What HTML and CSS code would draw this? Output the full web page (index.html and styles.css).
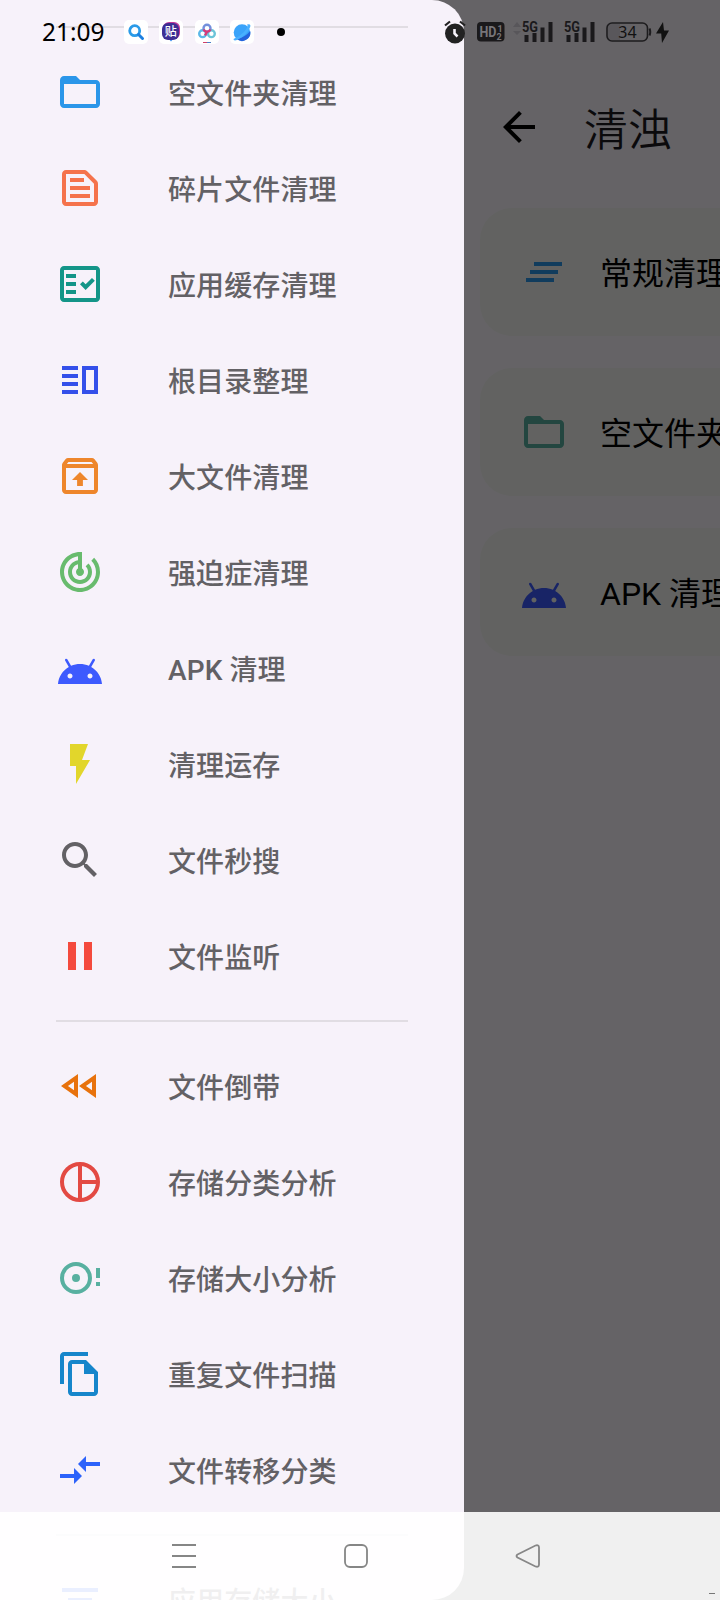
FILE: index.html
```html
<!DOCTYPE html>
<html lang="zh-CN">
<head>
	<meta charset="utf-8">
	<meta name="viewport" content="width=device-width, initial-scale=1">
<title>清浊</title>
<link rel="stylesheet" href="styles.css">
</head>
<body>

<!-- shared icons -->
<svg class="defs">
	<symbol id="folder" viewBox="0 0 24 24"><path d="M20 6h-8l-2-2H4c-1.1 0-1.99.9-1.99 2L2 18c0 1.1.9 2 2 2h16c1.1 0 2-.9 2-2V8c0-1.1-.9-2-2-2zm0 12H4V8h16v10z"/></symbol>
	<symbol id="android" viewBox="0 0 24 24"><path transform="translate(0 2)" d="M17.6 9.48l1.84-3.18c.16-.31.04-.69-.26-.85-.29-.15-.65-.06-.83.22l-1.88 3.24c-2.86-1.21-6.08-1.21-8.94 0L5.65 5.67c-.19-.29-.58-.38-.87-.2-.28.18-.37.54-.22.83L6.4 9.48C3.3 11.25 1.28 14.44 1 18h22c-.28-3.56-2.3-6.75-5.4-8.52zM7 15.25c-.69 0-1.25-.56-1.25-1.25s.56-1.25 1.25-1.25 1.25.56 1.25 1.25-.56 1.25-1.25 1.25zm10 0c-.69 0-1.25-.56-1.25-1.25s.56-1.25 1.25-1.25 1.25.56 1.25 1.25-.56 1.25-1.25 1.25z"/></symbol>
</svg>

<div class="screen">

<!-- page behind the drawer -->
<div class="app">
	<div class="toolbar">
		<svg class="icon" viewBox="0 0 24 24"><path d="M20 11H7.83l5.59-5.59L12 4l-8 8 8 8 1.41-1.41L7.83 13H20v-2z"/></svg>
		<h1>清浊</h1>
	</div>
	<div class="cards">
		<div class="card">
			<svg class="icon blue" viewBox="0 0 24 24"><path d="M5 13h14v-2H5v2zm-2 4h14v-2H3v2zM7 7v2h14V7H7z"/></svg>
			<span>常规清理</span>
		</div>
		<div class="card">
			<svg class="icon mint"><use href="#folder"/></svg>
			<span>空文件夹清理</span>
		</div>
		<div class="card">
			<svg class="icon indigo"><use href="#android"/></svg>
			<span>APK 清理</span>
		</div>
	</div>
</div>

<div class="scrim"></div>

<div class="drawer">
	<hr>
	<div class="item">
		<svg class="icon blue"><use href="#folder"/></svg>
		<span>空文件夹清理</span>
	</div>
	<div class="item">
		<svg class="icon coral" viewBox="0 0 24 24"><path d="M14.17 5L19 9.83V19H5V5h9.17m0-2H5c-1.1 0-2 .9-2 2v14c0 1.1.9 2 2 2h14c1.1 0 2-.9 2-2V9.83c0-.53-.21-1.04-.59-1.41l-4.83-4.83c-.37-.38-.88-.59-1.41-.59zM7 15h10v2H7v-2zm0-4h10v2H7v-2zm0-4h7v2H7V7z"/></svg>
		<span>碎片文件清理</span>
	</div>
	<div class="item">
		<svg class="icon teal" viewBox="0 0 24 24"><path d="M20 3H4c-1.1 0-2 .9-2 2v14c0 1.1.9 2 2 2h16c1.1 0 2-.9 2-2V5c0-1.1-.9-2-2-2zm0 16H4V5h16v14z"/><path d="M19.41 10.42L17.99 9l-3.17 3.17-1.41-1.42L12 12.16 14.82 15zM5 7h5v2H5zM5 11h5v2H5zM5 15h5v2H5z"/></svg>
		<span>应用缓存清理</span>
	</div>
	<div class="item">
		<svg class="icon royal" viewBox="0 0 24 24"><path fill-rule="evenodd" d="M3 5h8v2H3zM3 9h8v2H3zM3 13h8v2H3zM3 17h8v2H3zM13 5h8v14h-8zM15 7v10h4V7z"/></svg>
		<span>根目录整理</span>
	</div>
	<div class="item">
		<svg class="icon orange" viewBox="0 0 24 24"><path d="M20.55 5.22l-1.39-1.68C18.88 3.21 18.47 3 18 3H6c-.47 0-.88.21-1.15.55L3.46 5.22C3.17 5.57 3 6.01 3 6.5V19c0 1.1.89 2 2 2h14c1.1 0 2-.9 2-2V6.5c0-.49-.17-.93-.45-1.28zM6.24 5h11.52l.83 1H5.42l.82-1zM5 19V8h14v11H5zm3-5h2.55v3h2.9v-3H16l-4-4z"/></svg>
		<span>大文件清理</span>
	</div>
	<div class="item">
		<svg class="icon green" viewBox="0 0 24 24"><path d="M19.07 4.93l-1.41 1.41C19.1 7.79 20 9.79 20 12c0 4.42-3.58 8-8 8s-8-3.58-8-8c0-4.08 3.05-7.44 7-7.93v2.02C8.16 6.57 6 9.03 6 12c0 3.31 2.69 6 6 6s6-2.69 6-6c0-1.66-.67-3.16-1.76-4.24l-1.41 1.41C15.55 9.9 16 10.9 16 12c0 2.21-1.79 4-4 4s-4-1.79-4-4c0-1.86 1.28-3.41 3-3.86v2.14c-.6.35-1 .98-1 1.72 0 1.1.9 2 2 2s2-.9 2-2c0-.74-.4-1.38-1-1.72V2h-1C6.48 2 2 6.48 2 12s4.48 10 10 10 10-4.48 10-10c0-2.76-1.12-5.26-2.93-7.07z"/></svg>
		<span>强迫症清理</span>
	</div>
	<div class="item">
		<svg class="icon indigo"><use href="#android"/></svg>
		<span>APK 清理</span>
	</div>
	<div class="item">
		<svg class="icon yellow" viewBox="0 0 24 24"><path d="M7 2v11h3v9l7-12h-4l3-8z"/></svg>
		<span>清理运存</span>
	</div>
	<div class="item">
		<svg class="icon grey" viewBox="0 0 24 24"><path d="M15.5 14h-.79l-.28-.27C15.41 12.59 16 11.11 16 9.5 16 5.91 13.09 3 9.5 3S3 5.91 3 9.5 5.91 16 9.5 16c1.61 0 3.09-.59 4.23-1.57l.27.28v.79l5 4.99L20.49 19l-4.99-5zm-6 0C7.01 14 5 11.99 5 9.5S7.01 5 9.5 5 14 7.01 14 9.5 11.99 14 9.5 14z"/></svg>
		<span>文件秒搜</span>
	</div>
	<div class="item">
		<svg class="icon red" viewBox="0 0 24 24"><path d="M6 19h4V5H6v14zm8-14v14h4V5h-4z"/></svg>
		<span>文件监听</span>
	</div>
	<hr>
	<div class="item">
		<svg class="icon amber" viewBox="0 0 24 24"><path d="M18 9.86v4.28L14.97 12 18 9.86m-9 0v4.28L5.97 12 9 9.86M20 6l-8.5 6 8.5 6V6zm-9 0l-8.5 6 8.5 6V6z"/></svg>
		<span>文件倒带</span>
	</div>
	<div class="item">
		<svg class="icon pie" viewBox="0 0 24 24"><circle cx="12" cy="12" r="9"/><path d="M12 3v18M12 12h9"/></svg>
		<span>存储分类分析</span>
	</div>
	<div class="item">
		<svg class="icon mint" viewBox="0 0 24 24"><path fill-rule="evenodd" d="M10 4a8 8 0 1 0 0 16a8 8 0 1 0 0-16zM10 6a6 6 0 1 1 0 12a6 6 0 1 1 0-12zM10 10a2 2 0 1 0 0 4a2 2 0 1 0 0-4zM20 7h2v5h-2zM20 14h2v2h-2z"/></svg>
		<span>存储大小分析</span>
	</div>
	<div class="item">
		<svg class="icon sky" viewBox="0 0 24 24"><path fill-rule="evenodd" d="M16 1H4c-1.1 0-2 .9-2 2v14h2V3h12V1zM15 5l6 6v10c0 1.1-.9 2-2 2H8c-1.1 0-2-.9-2-2V7c0-1.1.9-2 2-2h7zM8 7v14h11v-9h-5V7z"/></svg>
		<span>重复文件扫描</span>
	</div>
	<div class="item">
		<svg class="icon azure" viewBox="0 0 24 24"><path d="M9.01 14H2v2h7.01v3L13 15l-3.99-4v3zm5.98-1v-3H22V8h-7.01V5L11 9l3.99 4z"/></svg>
		<span>文件转移分类</span>
	</div>
	<hr>
	<div class="item">
		<svg class="icon azure" viewBox="0 0 24 24"><path d="M10 18h4v-2h-4v2zM3 6v2h18V6H3zm3 7h12v-2H6v2z"/></svg>
		<span>应用存储大小</span>
	</div>
</div>

<div class="status">
	<span class="time">21:09</span>
	<div class="notes">
		<!-- search -->
		<svg viewBox="0 0 24 24"><rect width="24" height="24" rx="5" fill="#fff"/><circle cx="10.7" cy="10.7" r="5" fill="none" stroke="#2a9be8" stroke-width="2.8"/><path d="M14.5 14.5l4 4" stroke="#1c7fe0" stroke-width="3" stroke-linecap="round"/></svg>
		<!-- tieba -->
		<svg viewBox="0 0 24 24"><rect width="24" height="24" rx="5" fill="#fff"/><path d="M9 18h6l-3 3.500z" fill="#3e8ff0"/><rect x="4" y="2" width="17" height="17" rx="6" fill="#c23a9a"/><rect x="3" y="3" width="17" height="17" rx="6" fill="#3e2f94"/><text x="11.700" y="16" text-anchor="middle" class="tie">贴</text></svg>
		<!-- netdisk -->
		<svg viewBox="0 0 24 24"><rect width="24" height="24" rx="5" fill="#fff"/><g fill="none" stroke-width="2.400"><circle cx="7.600" cy="13.700" r="3.400" stroke="#5cb8e8"/><circle cx="16.400" cy="13.700" r="3.400" stroke="#6cc4d8"/><circle cx="12" cy="8.200" r="3.500" stroke="#7390dc"/><path d="M8.500 9.500q1.300 2.300 3.500 2.300t3.500-2.300M12 12l-2 3.400" stroke="#d83a78"/></g><path d="M8 22.500h4" stroke="#d0406a"/><path d="M12 22.500h4" stroke="#4a7fc8"/></svg>
		<!-- browser -->
		<svg viewBox="0 0 24 24"><rect width="24" height="24" rx="5" fill="#fff"/><circle cx="12" cy="12.500" r="8.300" fill="#3aa4fa"/><path d="M20.200 11a8.300 8.300 0 0 1-13.500 8Q15 17.500 20.200 11z" fill="#2463dc"/><path d="M3.500 19Q3.500 21.500 8 19.500Q17 15 20.200 7Q21.200 3.200 17 4.600Q19 6 14 12Q9 17 3.500 19z" fill="#48b0ff"/></svg>
	</div>
	<i class="dot"></i>
	<svg class="alarm" width="22" height="24" viewBox="0 0 22 24"><circle cx="11" cy="13.500" r="10" fill="#222"/><path d="M1 5.500L6 1.500M21 5.500L16 1.500" stroke="#222" stroke-width="2.200"/><path d="M10.500 9v4.500l3 3" stroke="#f6f2fa" stroke-width="2.600" fill="none"/></svg>
	<svg class="hd" width="28" height="20" viewBox="0 0 28 20"><rect width="27.500" height="19.500" rx="4" fill="#1a191b"/><text x="2.500" y="15" class="hdt" textLength="17" lengthAdjust="spacingAndGlyphs">HD</text><text x="20.500" y="9.500" class="sub">1</text><text x="19.500" y="17.500" class="sub">2</text></svg>
	<svg class="sig" width="42" height="24" viewBox="0 0 42 24"><path d="M0 7l4-5 4 5zM0 11l4 4 4-4z" fill="#58565a"/><text x="9" y="12" class="net" textLength="16" lengthAdjust="spacingAndGlyphs">5G</text><path d="M11.500 15h4v7h-4zM19.500 13h4v9h-4zM27.500 7.500h4V22h-4zM35.500 2h4v20h-4z"/></svg>
	<svg class="sig" width="42" height="24" viewBox="0 0 42 24"><text x="9" y="12" class="net" textLength="16" lengthAdjust="spacingAndGlyphs">5G</text><path d="M11.500 15h4v7h-4zM19.500 13h4v9h-4zM27.500 7.500h4V22h-4zM35.500 2h4v20h-4z"/></svg>
	<svg class="bat" width="46" height="20" viewBox="0 0 46 20"><path d="M5 2h9v16H5q-3 0-3-3V5q0-3 3-3z" fill="#59575b"/><rect x="1" y="1" width="40.500" height="18" rx="5" fill="none" stroke="#1d1c1e" stroke-width="1.600"/><path d="M43.500 6.500q1.500 3.500 0 7" stroke="#1d1c1e" stroke-width="2" fill="none"/><text x="21.500" y="15.500" text-anchor="middle" class="pct">34</text></svg>
	<svg class="bolt" width="13" height="21" viewBox="0 0 13 21"><path d="M7 0L0 11.500h5.200L6 21l7-12.500H8z" fill="#111"/></svg>
</div>

<div class="nav">
	<svg width="26" height="26" viewBox="0 0 26 26"><path d="M1 2h24M1 13h24M1 24h24"/></svg>
	<svg width="26" height="26" viewBox="0 0 26 26"><rect x="2" y="2" width="22" height="22" rx="5"/></svg>
	<svg width="26" height="26" viewBox="0 0 26 26"><path d="M2.500 11.500L20.500 2.500Q24 1.500 24 4.500v17Q24 24.500 20.500 23.500L2.500 14.500Q.5 13 2.500 11.500z"/></svg>
</div>
<i class="speck"></i>

</div>
</body>
</html>
```

FILE: styles.css
```css
body{
	margin:0;
	font-family:Roboto, "Noto Sans CJK SC", sans-serif;
	background:#fffbff;
}
.defs{
	display:none;
}
.screen{
	position:relative;
	width:720px;
	height:1600px;
	overflow:hidden;
}
.icon{
	width:48px;
	height:48px;
	flex:none;
	fill:currentColor;
}

/* page */
.app{
	padding:87px 0 0 480px;
	height:1513px;
	background:#fdf8ff;
}
.toolbar{
	display:flex;
	align-items:center;
	height:80px;
	padding-left:15px;
	color:#000;
}
.toolbar h1{
	margin:7px 0 0 41px;
	font-size:44px;
	line-height:60px;
	font-weight:350;
	color:#1c1b1f;
	white-space:nowrap;
}
.cards{
	display:flex;
	flex-direction:column;
	gap:32px;
	padding-top:41px;
}
.card{
	display:flex;
	align-items:center;
	gap:32px;
	width:400px;
	height:128px;
	padding-left:40px;
	box-sizing:border-box;
	border-radius:32px;
	background:#f4f6f3;
	font-size:32px;
	white-space:nowrap;
}
.card span{
	padding-bottom:2px;
}
.scrim{
	position:absolute;
	inset:0;
	background:rgba(0,0,0,.6);
}

/* drawer */
.drawer{
	position:absolute;
	left:0;
	top:0;
	width:464px;
	height:1600px;
	padding-top:10px;
	box-sizing:border-box;
	overflow:hidden;
	background:#f7f2fa;
	border-radius:0 32px 32px 0;
}
.drawer hr{
	height:2px;
	margin:16px 56px;
	border:0;
	background:#e1dde3;
}
.item{
	display:flex;
	align-items:center;
	height:96px;
	padding-left:56px;
	gap:64px;
	font-size:28px;
	font-weight:500;
	letter-spacing:.1px;
	color:#636165;
}

.blue{color:#2b96e9;}
.coral{color:#f5734c;}
.teal{color:#149588;}
.royal{color:#3450ea;}
.orange{color:#ee862b;}
.green{color:#68bb6d;}
.indigo{color:#3d5afe;}
.yellow{color:#e2d62b;}
.grey{color:#636165;}
.red{color:#f44a3d;}
.amber{color:#e8720c;}
.mint{color:#58b0a0;}
.sky{color:#1686cb;}
.azure{color:#2c62fa;}
.pie{
	fill:none;
	stroke:#e34a43;
	stroke-width:2;
}

/* system bars */
.status{
	position:absolute;
	left:0;
	top:0;
	width:720px;
	height:64px;
	display:flex;
	align-items:center;
	box-sizing:border-box;
	padding-left:42px;
}
.status svg{
	flex:none;
}
.time{
	width:82px;
	padding-bottom:1px;
	font-family:"Noto Sans", sans-serif;
	font-size:24.5px;
	color:#000;
}
.notes{
	display:flex;
	gap:11.3px;
}
.notes svg{
	width:24px;
	height:24px;
}
.tie{
	font:500 12px "Noto Sans CJK SC", sans-serif;
	fill:#fff;
}
.dot{
	width:8px;
	height:8px;
	margin-left:23px;
	border-radius:50%;
	background:#000;
}
.alarm{
	margin-left:159px;
}
.hd{
	margin-left:11px;
}
.hdt{
	font:bold 14px Roboto, sans-serif;
	fill:#777579;
}
.sub{
	font:bold 9px Roboto, sans-serif;
	fill:#777579;
}
.sig{
	fill:#1a191b;
}
.hd + .sig{
	margin-left:8px;
}
.net{
	font:bold 14px Roboto, sans-serif;
}
.bat{
	margin-left:9px;
}
.pct{
	font:400 16px "Noto Sans", sans-serif;
	fill:#111;
}
.bolt{
	margin-left:4px;
}
.nav{
	position:absolute;
	left:0;
	bottom:0;
	width:720px;
	height:88px;
	display:flex;
	align-items:center;
	gap:146px;
	box-sizing:border-box;
	padding-left:171px;
	background:rgba(255,255,255,.9);
}
.nav svg{
	fill:none;
	stroke:#868686;
	stroke-width:1.8;
}
.speck{
	position:absolute;
	right:5px;
	bottom:6px;
	width:6px;
	height:1px;
	background:#777;
}
```
